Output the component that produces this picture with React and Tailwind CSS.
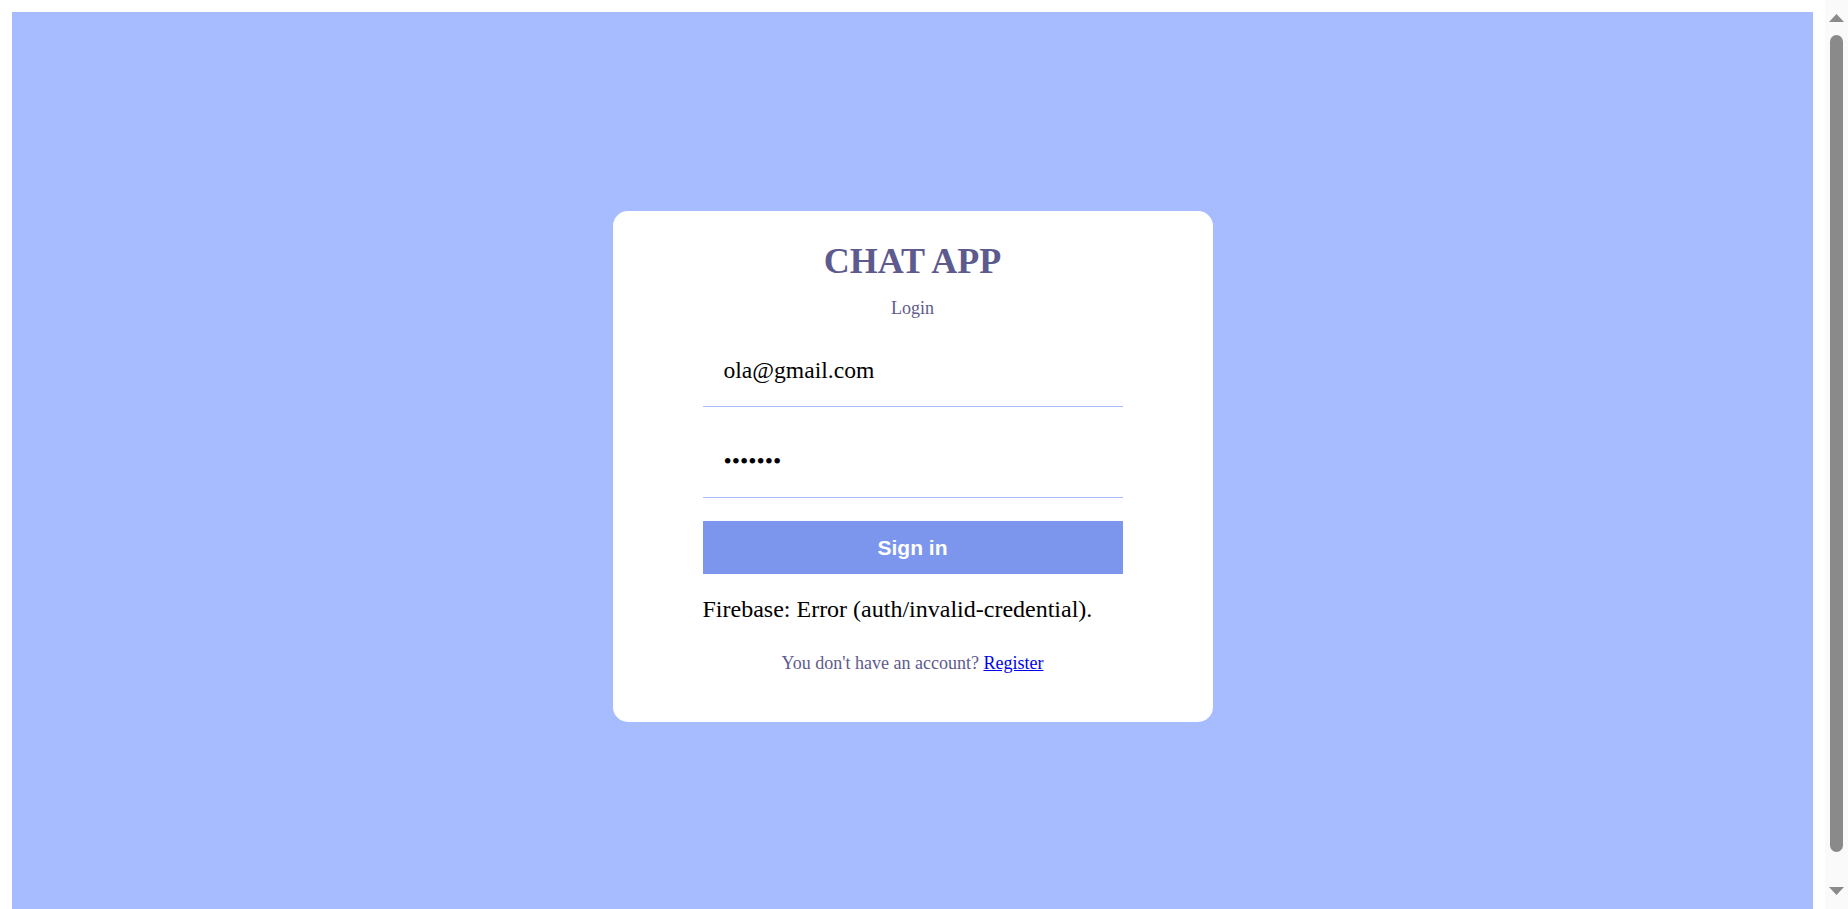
import React from 'react';

const serif = { fontFamily: '"Liberation Serif", "Times New Roman", serif' };

// looks like the browser's scrollbar on the right side of the screenshot
const ScrollBar = () => (
    <div className="w-[23px] shrink-0 bg-[#fafafa] flex flex-col items-center pt-[14px]">
        <svg width="15" height="8" viewBox="0 0 15 8"><polygon points="7.5,0 15,8 0,8" fill="#8a8a8a" /></svg>
        <div className="mt-[13px] w-[13px] h-[817px] rounded-full bg-[#8a8a8a]" />
        <svg className="mt-[35px]" width="15" height="8" viewBox="0 0 15 8"><polygon points="0,0 15,0 7.5,8" fill="#8a8a8a" /></svg>
    </div>
);

const Login = () => {
    return (
        <div className="flex-1 pt-[12px] px-[12px]">
            <div className="h-screen bg-[#a7bcff] flex items-center justify-center">
                <div className="w-[600px] bg-white rounded-[15px] pt-[28px] pb-[48px] flex flex-col items-center">
                    <h1 className="text-[36px] leading-[44px] font-bold text-[#5d5b8d]">CHAT APP</h1>
                    <span className="mt-[14px] text-[18px] leading-[22px] text-[#5d5b8d]">Login</span>

                    <form className="mt-[16px] w-[420px] flex flex-col" onSubmit={(e) => e.preventDefault()}>
                        <input
                            type="email"
                            defaultValue="ola@gmail.com"
                            className="h-[72px] px-[21px] font-['Liberation_Serif',serif] text-[23.6px] text-black bg-transparent border-b border-[#a7bcff] outline-none"
                        />
                        <input
                            type="password"
                            defaultValue="1234567"
                            className="mt-[19px] h-[72px] px-[21px] font-['Liberation_Serif',serif] text-[23.6px] text-black bg-transparent border-b border-[#a7bcff] outline-none"
                        />
                        <button
                            className="mt-[23px] h-[53px] bg-[#7b96ec] text-white text-[21px] font-bold font-['Liberation_Sans',Arial,sans-serif]"
                        >
                            Sign in
                        </button>
                        <span className="mt-[21px] text-[24px] leading-[28px] text-black">
                            Firebase: Error (auth/invalid-credential).
                        </span>
                    </form>

                    <p className="mt-[29px] text-[18px] leading-[22px] text-[#5d5b8d]">
                        You don't have an account? <a href="#" className="text-[#0000ee] underline">Register</a>
                    </p>
                </div>
            </div>
        </div>
    );
};

export default function App() {
    return (
        <div className="h-screen overflow-hidden bg-white flex" style={serif}>
            <Login />
            <ScrollBar />
        </div>
    );
}
